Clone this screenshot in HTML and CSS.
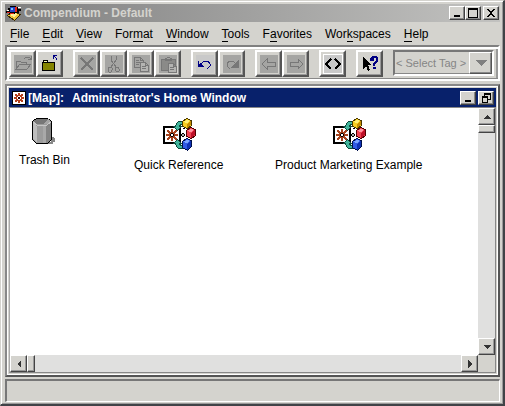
FILE: index.html
```html
<!DOCTYPE html>
<html lang="en">
<head>
<meta charset="utf-8">
<title>Compendium - Default</title>
<link rel="stylesheet" href="styles.css">
</head>
<body>
<svg class="defs" aria-hidden="true">
  <symbol id="asterisk" viewBox="0 0 14 14">
    <path d="M0 0h14v14H0z"/><path fill="#fff" d="M1 1h12v12H1z"/>
    <path fill="#b5401c" d="M6 2h2v3H6zM6 9h2v3H6zM2 6h3v2H2zM9 6h3v2H9zM3 3h2v1h1v2H4V5H3zM11 3H9v1H8v2h2V5h1zM3 11h2v-1h1V8H4v1H3zM11 11H9v-1H8V8h2v1h1z"/>
    <path fill="#300" d="M6 6h2v2H6z"/>
  </symbol>
  <symbol id="map" viewBox="0 0 34 34">
    <path fill="#fff" stroke="#000" stroke-width="2" d="M2 9h16v16H2z"/>
    <path fill="#a5431c" d="M9 11h2v4H9zM9 19h2v4H9zM4 16h4v2H4zM12 16h4v2h-4zM5 12h2v1h1v1h1v2H7v-1H6v-1H5zM15 12h-2v1h-1v1h-1v2h2v-1h1v-1h1zM5 22h2v-1h1v-1h1v-2H7v1H6v1H5zM15 22h-2v-1h-1v-1h-1v-2h2v1h1v1h1z"/>
    <path d="M9 15h2v1h1v2h-1v1H9v-1H8v-2h1z"/><path fill="#fff" d="M9 16h2v2H9z"/>
    <path fill="#42b59c" stroke="#0b4a3c" d="M20.500 3.500h-4l-2 2-1 3h-2l4 4 4-4h-2l1-2h2zM20.500 30.500h-4l-2-2-1-3h-2l4-4 4 4h-2l1 2h2z"/>
    <path fill="none" stroke="#000" stroke-dasharray="2 1" d="M21 10l3 2M24 22l-3 2"/>
    <path d="M20 15h2v1h1v2h-1v1h-2v-1h-1v-2h1z"/><path fill="#aaa" d="M20 16h2v2h-2z"/>
    <path fill="#f6ce21" stroke="#4a3900" d="M20.500 3.500l4-3 5 2v5l-4 3-5-2z"/><path fill="#ffef73" d="M21 4l4-2 3 1-3 2z"/><path fill="#c58c00" d="M25 6l4-3v4l-4 3z"/>
    <path fill="#ef4252" stroke="#520000" d="M24.500 12.500l4-3 5 2v6l-4 3-5-2z"/><path fill="#ff94a5" d="M25 13l4-2 3 1-3 2z"/><path fill="#bd1029" d="M29 15l4-3v5l-4 3z"/>
    <path fill="#315ae6" stroke="#00104a" d="M20.500 23.500l4-3 5 2v6l-4 4-5-3z"/><path fill="#7ba5ff" d="M21 24l4-2 3 1-3 2z"/><path fill="#1031b5" d="M25 26l4-3v5l-4 4z"/>
  </symbol>
</svg>
<div class="window">
  <header class="titlebar">
    <svg class="app-icon" viewBox="0 0 16 16" aria-hidden="true">
      <path fill="#efc63a" stroke="#392900" d="M1.500 10.500l6-4 7 3-6 6z"/><path fill="#fff39a" d="M4 10l4-2 4 1-4 3z"/>
      <path d="M0 6h2V3h2V1h6v1h2v2h3v2h-2v2H9v1H3V8H0z"/>
      <path fill="#2142c5" d="M4 2h5v5H4z"/><path fill="#7bc6ff" d="M5 3h2v2H5z"/>
      <path fill="#e72118" d="M9 2h2v5H9zM1 7h3v1H1zM4 8h4v1H4z"/><path fill="#fff" d="M12 2h3v1h-3zM1 5h2v1H1z"/>
    </svg>
    <h1>Compendium - Default</h1>
    <div class="controls">
      <button class="ctl" aria-label="Minimize"><svg viewBox="0 0 12 10"><path d="M3 7h6v2H3z"/></svg></button>
      <button class="ctl" aria-label="Maximize"><svg viewBox="0 0 12 10"><path fill-rule="evenodd" d="M1 0h10v10H1zM2 2v7h8V2z"/></svg></button>
      <button class="ctl close" aria-label="Close"><svg viewBox="0 0 12 10"><path d="M2 1h2v1h1v1h2V2h1V1h2v1H9v1H8v1H7v2h1v1h1v1h1v1H8V8H7V7H5v1H4v1H2V8h1V7h1V6h1V4H4V3H3V2H2z"/></svg></button>
    </div>
  </header>
  <nav class="menubar">
    <button><u>F</u>ile</button><button><u>E</u>dit</button><button><u>V</u>iew</button><button>For<u>m</u>at</button><button><u>W</u>indow</button><button><u>T</u>ools</button><button>F<u>a</u>vorites</button><button>Wor<u>k</u>spaces</button><button><u>H</u>elp</button>
  </nav>
  <div class="toolbar" role="toolbar">
    <div class="group">
      <button class="tool" disabled aria-label="Open"><svg viewBox="0 0 18 18"><path d="M2 14V6h4l1 1h5v3M2 14l4-5h11l-4 5zM10 4l2-2h3l2 2M17 1v3h-3"/></svg></button>
      <button class="tool" aria-label="Up a level"><svg viewBox="0 0 18 18"><path fill="#848400" stroke="#000" d="M1.500 7.500h12v8h-12zM2.500 7.500v-2h4v2"/><path fill="#ffffb0" d="M3 6h3v1H3z"/><path fill="#000084" d="M12 0h4v1h-2v1h1v1h1v2h-1V3h-1V2h-1v2h-1z"/></svg></button>
    </div>
    <div class="group">
      <button class="tool" disabled aria-label="Delete"><svg viewBox="0 0 18 18"><path stroke-width="2" d="M3 3l12 12M15 3L3 15"/></svg></button>
      <button class="tool" disabled aria-label="Cut"><svg viewBox="0 0 18 18"><path d="M6 1v4l5 7M11 1v4l-5 7M3 12h3l1 1v2l-1 2H4l-1-2zM11 12h2l1 2v2l-2 1-2-2v-2z"/></svg></button>
      <button class="tool" disabled aria-label="Copy"><svg viewBox="0 0 18 18"><path d="M2 2h6l3 3v7H2zM8 2v3h3M4 5h3M4 7h5M4 9h3"/><path class="sheet" d="M8 7h5l3 3v6H8zM13 7v3h3M10 11h4M10 13h4"/></svg></button>
      <button class="tool" disabled aria-label="Paste"><svg viewBox="0 0 18 18"><path fill="#8a8a88" d="M2 4h14v11H2z"/><path d="M6 5V3h2l1-1 2 1h1v2z"/><path class="sheet" d="M9 8h5l3 3v6H9zM14 8v3h3M11 12h4M11 14h4"/></svg></button>
    </div>
    <div class="group">
      <button class="tool" aria-label="Undo"><svg class="lit" viewBox="0 0 18 18"><path fill="#000084" d="M2 6h1v3h1V8h1v1h1v1h1v1h1v1H2z"/><path stroke="#000084" d="M5 9l3-3h4l2 3v2l-3 3"/></svg></button>
      <button class="tool" disabled aria-label="Redo"><svg viewBox="0 0 18 18"><path fill="#777" d="M15 6v6H9z"/><path d="M13 9l-3-3H6L4 9v2l3 3"/></svg></button>
    </div>
    <div class="group">
      <button class="tool" disabled aria-label="Back"><svg viewBox="0 0 18 18"><path d="M2 9l5-5v3h8v4H7v3z"/></svg></button>
      <button class="tool" disabled aria-label="Forward"><svg viewBox="0 0 18 18"><path d="M16 9l-5-5v3H3v4h8v3z"/></svg></button>
    </div>
    <div class="group">
      <button class="tool" aria-label="Source"><svg class="lit ring" viewBox="0 0 18 18"><path stroke="#000" stroke-width="1.500" d="M7 4L2 9l5 5M11 4l5 5-5 5"/></svg></button>
    </div>
    <div class="group">
      <button class="tool" aria-label="Context help"><svg viewBox="0 0 18 18"><path fill="#000" d="M2 2l8 8H7l2 5-2 1-2-5-3 3z"/><path fill="#000084" d="M9 3l2-2h4l2 2v4l-3 2v2h-2V8l3-2V3h-2v3H9zM12 12h3v2h-3z"/></svg></button>
    </div>
    <div class="combo">
      <select aria-label="Tag" disabled><option>&lt; Select Tag &gt;</option></select>
      <span class="drop"><svg viewBox="0 0 12 6"><path d="M0 0h12L6 6z"/></svg></span>
    </div>
  </div>
  <main class="frame">
    <header class="frame-title">
      <svg class="map-icon" aria-hidden="true"><use href="#asterisk"/></svg>
      <h2><span>[Map]:</span><span>Administrator's Home Window</span></h2>
      <div class="controls">
        <button class="ctl" aria-label="Minimize map"><svg viewBox="0 0 12 10"><path d="M3 7h6v2H3z"/></svg></button>
        <button class="ctl" aria-label="Restore map"><svg viewBox="0 0 12 10"><path fill-rule="evenodd" d="M4 0h7v7H8v3H2V3h2zM5 2v1h3v3h2V2zM3 5v4h4V5z"/></svg></button>
      </div>
    </header>
    <div class="pane">
      <div class="canvas">
        <a class="node trash" href="#trash"><svg viewBox="0 0 26 30"><path fill="#888" d="M20 20h3v1h1v4h-2v2H12v-2h8z"/><path fill="#9c9c9c" stroke="#000" d="M1.500 4.500l4-3h11l4 3v18l-4 4h-11l-4-4z"/><path fill="#bdbdbd" d="M2 6l4 3v17l-4-4z"/><path fill="#848484" d="M15 9l5-3v16l-4 4h-1z"/><path fill="#a9a9a9" d="M12 9h3v17h-3z"/><path fill="#777" d="M2 4l4-2h10l4 2-4 3H6z"/><path fill="#a5a5a5" d="M12 7l5-5 3 2-4 3z"/><path fill="none" stroke="#c6c6c6" d="M2 5l4 3h10l4-3"/></svg><span>Trash Bin</span></a>
        <a class="node quick" href="#quick"><svg><use href="#map"/></svg><span>Quick Reference</span></a>
        <a class="node product" href="#product"><svg><use href="#map"/></svg><span>Product Marketing Example</span></a>
      </div>
      <div class="vbar">
        <button class="arrow" aria-label="Scroll up"><svg viewBox="0 0 8 8"><path d="M4 2l4 4H0z"/></svg></button>
        <span class="thumb"></span>
        <button class="arrow end" aria-label="Scroll down"><svg viewBox="0 0 8 8"><path d="M0 2h8L4 6z"/></svg></button>
      </div>
      <div class="hbar">
        <button class="arrow" aria-label="Scroll left"><svg viewBox="0 0 8 8"><path d="M2 4l4-4v8z"/></svg></button>
        <span class="thumb"></span>
        <button class="arrow end" aria-label="Scroll right"><svg viewBox="0 0 8 8"><path d="M2 0l4 4-4 4z"/></svg></button>
      </div>
    </div>
  </main>
  <footer class="status"></footer>
</div>
</body>
</html>
```
FILE: styles.css
```css
* { box-sizing: border-box; }
body { margin: 0; font: 12px/14px "Liberation Sans", Arial, sans-serif; color: #000; }
.defs { position: absolute; width: 0; height: 0; }
svg { display: block; shape-rendering: crispEdges; }
button { font: inherit; color: inherit; margin: 0; padding: 0; border: 0; background: none; }
h1, h2 { margin: 0; font-size: 12px; white-space: nowrap; }

.window {
  height: 100vh; display: flex; flex-direction: column;
  padding: 3px 3px 2px 4px; background: #d4d3ce;
  border: 1px solid #d4d3ce; border-right: 2px solid #404347; border-bottom: 2px solid #404347;
  box-shadow: inset 1px 1px #fff, inset -1px -1px #999;
}

.titlebar { display: flex; align-items: center; height: 18px; padding: 0 1px; background: linear-gradient(90deg, #808080, #c2c2c0); }
.app-icon { width: 16px; height: 16px; margin-right: 2px; }
h1 { color: #d4d3ce; font-size: 12px; font-weight: 700; }
.controls { display: flex; margin-left: auto; }
.ctl { display: grid; place-items: center; width: 16px; height: 14px; background: #d4d3ce; border: 1px solid; border-color: #fff #404040 #404040 #fff; box-shadow: inset -1px -1px #888; }
.ctl svg { width: 12px; height: 10px; }
.ctl.close { margin-left: 2px; }

.menubar { display: flex; gap: 13px; align-items: center; height: 23px; padding: 0 5px; }
.menubar u { text-decoration: none; border-bottom: 1px solid #000; }

.toolbar {
  display: flex; gap: 10px; height: 36px; padding: 3px 2px;
  border: 2px solid; border-color: #808080 #fff #fff #808080;
  box-shadow: inset 1px 1px #fff, inset 2px 2px #fff, inset 0 -1px #888, inset -2px 0 #999;
}
.group { display: flex; }
.tool { display: grid; place-items: center; width: 27px; height: 27px; background: #d4d3ce; border: 2px solid; border-color: #fff #555 #555 #fff; box-shadow: inset -1px -1px #999; }
.tool svg { width: 18px; height: 18px; fill: none; }
.tool:disabled svg { background: #a5a5a3; stroke: #777; }
.tool:disabled .sheet { fill: #b4b4b2; }
.tool .lit { background: #c9c9c9; }
.tool .ring { outline: 1px solid #fff; }

.combo { display: flex; flex: 1; height: 26px; margin-right: 2px; border: 2px solid; border-color: #777 #fff #fff #777; box-shadow: inset -1px -1px #888; }
.combo select { flex: 1; min-width: 0; appearance: none; border: 0; padding: 0 1px; margin: 0; background: none; color: #858585; opacity: 1; font: 11px "Liberation Sans", Arial, sans-serif; }
.drop { display: grid; place-items: center; width: 23px; background: #d4d3ce; border: 1px solid; border-color: #fff #555 #555 #fff; box-shadow: inset -1px -1px #888; }
.drop svg { width: 12px; height: 6px; fill: #808080; }

.frame {
  flex: 1; min-height: 0; display: flex; flex-direction: column; margin-top: 3px; padding: 2px;
  border: 2px solid; border-color: #888 #555 #555 #888;
  outline: 1px solid #fff; outline-offset: -3px;
}
.frame-title { display: flex; align-items: center; height: 19px; padding: 0 2px 0 3px; background: #08216b; color: #fff; }
.map-icon { width: 14px; height: 14px; margin-right: 2px; }
h2 { display: flex; gap: 8px; }
.frame-title .controls { gap: 2px; }
.pane { flex: 1; min-height: 0; display: grid; grid-template: 1fr 17px / 1fr 17px; border: 1px solid; border-color: #888 #888 #888 #aaa; }
.canvas { position: relative; overflow: hidden; background: #fff; }
.node { position: absolute; display: flex; flex-direction: column; align-items: center; gap: 6px; color: #000; text-decoration: none; white-space: nowrap; }
.node svg { width: 34px; height: 34px; }
.trash { left: 9px; top: 9px; }
.trash svg { width: 26px; height: 30px; }
.quick { left: 124px; top: 10px; }
.product { left: 265px; top: 10px; }
.vbar, .hbar { display: flex; background: #e0e0df; }
.vbar { flex-direction: column; }
.arrow, .thumb { background: #d4d3ce; border: 1px solid; border-color: #fff #444 #444 #fff; box-shadow: inset -1px -1px #999; }
.arrow { display: grid; place-items: center; flex: none; width: 17px; height: 17px; }
.arrow svg { width: 8px; height: 8px; fill: #333; }
.vbar .thumb { height: 8px; }
.hbar .thumb { width: 8px; }
.vbar .end { margin-top: auto; }
.hbar .end { margin-left: auto; }

.status { height: 23px; margin-top: 2px; border: 2px solid; border-color: #777 #fff #fff #777; border-width: 2px 1px 1px 2px; }
```
